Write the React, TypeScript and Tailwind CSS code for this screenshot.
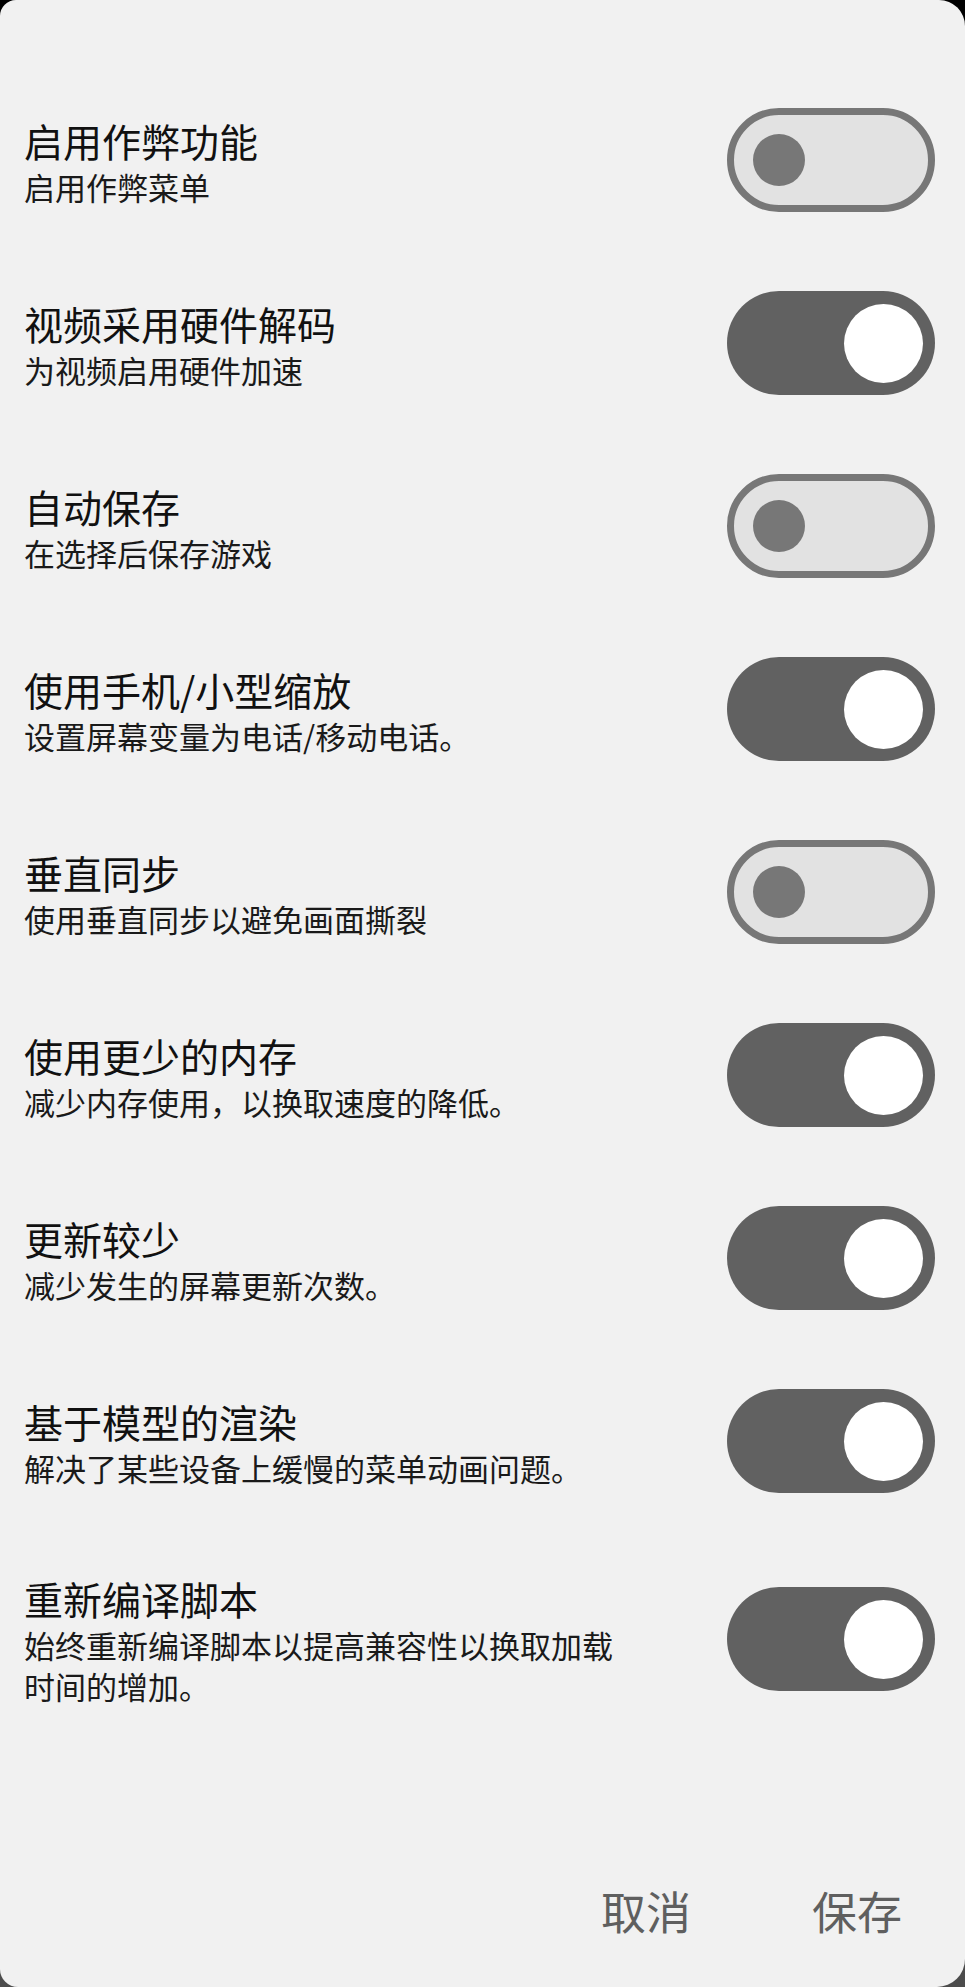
import { useState } from 'react';

const settings = [
  { id: 'cheats', title: '启用作弊功能', desc: '启用作弊菜单', on: false },
  { id: 'hwvideo', title: '视频采用硬件解码', desc: '为视频启用硬件加速', on: true },
  { id: 'autosave', title: '自动保存', desc: '在选择后保存游戏', on: false },
  { id: 'phone', title: '使用手机/小型缩放', desc: '设置屏幕变量为电话/移动电话。', on: true },
  { id: 'vsync', title: '垂直同步', desc: '使用垂直同步以避免画面撕裂', on: false },
  { id: 'lowmem', title: '使用更少的内存', desc: '减少内存使用，以换取速度的降低。', on: true },
  { id: 'fewer', title: '更新较少', desc: '减少发生的屏幕更新次数。', on: true },
  { id: 'model', title: '基于模型的渲染', desc: '解决了某些设备上缓慢的菜单动画问题。', on: true },
  { id: 'recompile', title: '重新编译脚本', desc: '始终重新编译脚本以提高兼容性以换取加载时间的增加。', on: true },
];

function Toggle({ on, onClick }: { on: boolean; onClick: () => void }) {
  if (on) {
    return (
      <button
        onClick={onClick}
        className="shrink-0 w-[208px] h-[104px] rounded-full bg-[#616161] flex items-center justify-end pr-[12px]"
      >
        <span className="block w-[79px] h-[79px] rounded-full bg-white" />
      </button>
    );
  }
  return (
    <button
      onClick={onClick}
      className="shrink-0 w-[208px] h-[104px] rounded-full bg-[#e2e2e2] border-[7px] border-[#777777] flex items-center pl-[19px]"
    >
      <span className="block w-[52px] h-[52px] rounded-full bg-[#777777]" />
    </button>
  );
}

export default function App() {
  const [values, setValues] = useState(settings.map((s) => s.on));

  const flip = (i: number) => {
    setValues((prev) => prev.map((v, j) => (j === i ? !v : v)));
  };

  return (
    <div className="h-screen bg-linear-to-b from-black to-[#4c4c4c]">
      <div
        className="h-full bg-[#f1f1f1] rounded-tl-[16px] rounded-tr-[26px] rounded-bl-[18px] rounded-br-[28px] flex flex-col pt-[108px]"
        style={{ fontFamily: '"Noto Sans CJK SC", "Noto Sans", sans-serif' }}
      >
        {/* Options */}
        <div className="flex flex-col gap-[79px] pl-[24px] pr-[30px]">
          {settings.map((s, i) => (
            <div key={s.id} className="flex items-center justify-between">
              <div className="w-[600px]">
                <div className="text-[39px] leading-[52px] text-[#111111]">{s.title}</div>
                <div className="text-[31px] leading-[41px] text-[#1a1a1a]">{s.desc}</div>
              </div>
              <Toggle on={values[i]} onClick={() => flip(i)} />
            </div>
          ))}
        </div>

        {/* Buttons */}
        <div className="flex justify-end gap-[121px] pr-[63px] mt-[178px]">
          <button className="text-[45px] leading-[54px] text-[#5f5f5f]">取消</button>
          <button className="text-[45px] leading-[54px] text-[#5f5f5f]">保存</button>
        </div>
      </div>
    </div>
  );
}
